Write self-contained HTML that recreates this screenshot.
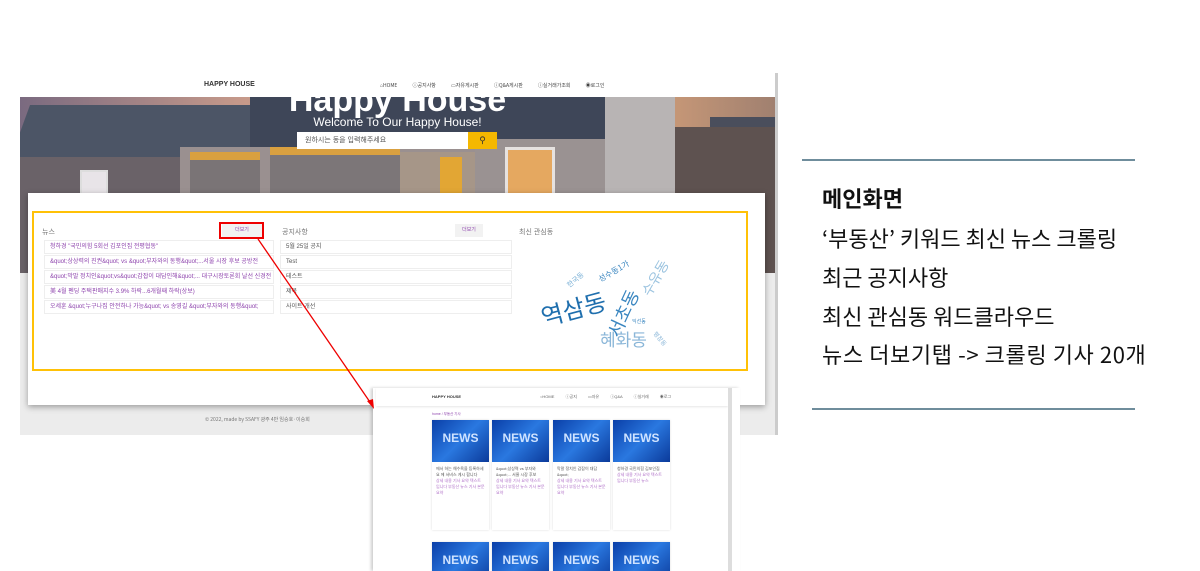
<!DOCTYPE html>
<html><head><meta charset="utf-8">
<style>
*{margin:0;padding:0;box-sizing:border-box}
html,body{width:1200px;height:571px;overflow:hidden}
body{background:#fff;position:relative;font-family:"Liberation Sans","Noto Sans CJK KR",sans-serif}
.abs{position:absolute}
.nav{left:20px;top:73px;width:758px;height:24px;background:#fff;font-size:7px;color:#333}
.hero{left:20px;top:97px;width:755px;height:176px;overflow:hidden;background:#8a8088}
.card{left:28px;top:193px;width:737px;height:212px;background:#fff;box-shadow:0 2px 6px rgba(0,0,0,.35)}
.ybox{left:32px;top:211px;width:716px;height:160px;border:2px solid #ffc107}
.row{position:absolute;height:14px;border:1px solid #eee;font-size:6px;line-height:12px;padding-left:5px;white-space:nowrap;overflow:hidden}
.news{color:#8e44ad;left:44px;width:230px}
.notice{color:#555;left:280px;width:232px}
.wc{position:absolute;color:#2a7ab8;white-space:nowrap;font-family:"Noto Sans CJK KR",sans-serif}
.nc{position:absolute;width:57px;height:110px;background:#fff;box-shadow:0 0 2px rgba(0,0,0,.15)}
.nimg{width:57px;height:42px;background:linear-gradient(135deg,#0a3fa8,#2a78e0 50%,#0b3a9a);color:#cfe3ff;font-size:12px;text-align:center;line-height:36px;font-weight:bold}
.ntx{font-size:4px;line-height:6px;color:#555;padding:4px}
.side{font-size:22px;color:#111;left:822px;font-family:"Noto Sans CJK KR",sans-serif;white-space:nowrap}
</style></head><body>

<div class="abs" style="left:20px;top:97px;width:758px;height:338px;background:#ececec"></div>
<div class="abs nav">
  <div class="abs" style="left:184px;top:8px;font-size:7px;font-weight:bold;color:#333">HAPPY HOUSE</div>
  <div class="abs" style="left:360px;top:9px;font-size:5px;color:#444;word-spacing:14px;font-family:'Noto Sans CJK KR',sans-serif">⌂HOME ⓘ공지사항 ▭자유게시판 ⓘQ&amp;A게시판 ⓘ실거래가조회 ◉로그인</div>
</div>
<div class="abs hero">
  <!-- sky -->
  <div class="abs" style="left:0;top:0;width:755px;height:40px;background:linear-gradient(90deg,#7a6a80,#c79a8a 30%,#8a7a88 50%,#d8a27a 80%,#a08070)"></div>
  <!-- roofs -->
  <div class="abs" style="left:0;top:8px;width:290px;height:55px;background:#4c5566;transform:skewX(-20deg)"></div>
  <div class="abs" style="left:230px;top:0;width:400px;height:55px;background:#3e4658"></div>
  <div class="abs" style="left:690px;top:20px;width:70px;height:40px;background:#4a4e5c"></div>
  <!-- walls -->
  <div class="abs" style="left:0;top:60px;width:160px;height:116px;background:#6a6268"></div>
  <div class="abs" style="left:60px;top:73px;width:28px;height:44px;background:#e8e4e8;border:2px solid #ddd"></div>
  <div class="abs" style="left:160px;top:50px;width:300px;height:126px;background:#9a9090"></div>
  <div class="abs" style="left:170px;top:55px;width:70px;height:121px;background:#7a7476"></div>
  <div class="abs" style="left:170px;top:55px;width:70px;height:8px;background:#d9a040"></div>
  <div class="abs" style="left:250px;top:50px;width:130px;height:126px;background:#7c7678"></div>
  <div class="abs" style="left:250px;top:50px;width:130px;height:8px;background:#d9a040"></div>
  <div class="abs" style="left:380px;top:55px;width:80px;height:121px;background:#a69688"></div>
  <div class="abs" style="left:420px;top:60px;width:22px;height:116px;background:#e2a634"></div>
  <div class="abs" style="left:455px;top:42px;width:130px;height:134px;background:#9a9292"></div>
  <div class="abs" style="left:485px;top:50px;width:50px;height:75px;background:#e5a860;border:3px solid #e6e2e0"></div>
  <div class="abs" style="left:585px;top:0;width:70px;height:176px;background:#b8b4b4"></div>
  <div class="abs" style="left:655px;top:30px;width:100px;height:146px;background:#5e5250"></div>
  <div class="abs" style="left:690px;top:100px;width:50px;height:76px;background:#6a3f34"></div>
  <div class="abs" style="left:0;top:-16px;width:755px;text-align:center;font-size:34px;font-weight:bold;color:#fff">Happy House</div>
  <div class="abs" style="left:0;top:18px;width:755px;text-align:center;font-size:12px;color:#fff">Welcome To Our Happy House!</div>
  <div class="abs" style="left:277px;top:35px;width:171px;height:17px;background:#fff;font-size:7px;line-height:17px;padding-left:8px;color:#555">원하시는 동을 입력해주세요</div>
  <div class="abs" style="left:448px;top:35px;width:29px;height:17px;background:#f5b800;font-size:9px;line-height:17px;text-align:center;color:#333">⚲</div>
</div>
<div class="abs" style="left:775px;top:73px;width:3px;height:362px;background:#ccc"></div>

<div class="abs card"></div>
<div class="abs ybox"></div>
<div class="abs" style="left:42px;top:227px;font-size:7px;color:#777">뉴스</div>
<div class="abs" style="left:222px;top:224px;width:40px;height:13px;background:#f2f2f2;font-size:5px;color:#8e44ad;text-align:center;line-height:12px">더보기</div>
<div class="abs" style="left:219px;top:222px;width:45px;height:17px;border:2px solid #e00"></div>
<div class="abs" style="left:282px;top:227px;font-size:7px;color:#777">공지사항</div>
<div class="abs" style="left:455px;top:224px;width:28px;height:13px;background:#f2f2f2;font-size:5px;color:#8e44ad;text-align:center;line-height:12px">더보기</div>
<div class="abs" style="left:519px;top:227px;font-size:7px;color:#777">최신 관심동</div>

<div class="row news" style="top:240px">청하경 "국민의힘 5회선 김포인집 전평협동"</div>
<div class="row news" style="top:255px">&amp;quot;상상력의 진권&amp;quot; vs &amp;quot;부자와의 동행&amp;quot;...서울 시장 후보 공방전</div>
<div class="row news" style="top:270px">&amp;quot;막말 정치인&amp;quot;vs&amp;quot;감잡이 대담인해&amp;quot;... 대구시장토론회 날선 신경전</div>
<div class="row news" style="top:285px">美 4월 펜딩 주택판매지수 3.9% 하락...6개월째 하락(상보)</div>
<div class="row news" style="top:300px">오세훈 &amp;quot;누구나집 안전하나 가능&amp;quot; vs 송영길 &amp;quot;부자와의 동행&amp;quot;</div>
<div class="row notice" style="top:240px">5월 25일 공지</div>
<div class="row notice" style="top:255px">Test</div>
<div class="row notice" style="top:270px">테스트</div>
<div class="row notice" style="top:285px">제목</div>
<div class="row notice" style="top:300px">사이트 개선</div>

<div class="wc" style="left:540px;top:290px;font-size:24px;color:#1f6fae;transform:rotate(-15deg)">역삼동</div>
<div class="wc" style="left:600px;top:326px;font-size:17px;color:#8ab6d8">혜화동</div>
<div class="wc" style="left:598px;top:300px;font-size:18px;color:#3a86c0;transform:rotate(-65deg)">서초동</div>
<div class="wc" style="left:636px;top:268px;font-size:14px;color:#9cc4e0;transform:rotate(-60deg)">수유동</div>
<div class="wc" style="left:597px;top:266px;font-size:8px;color:#3a86c0;transform:rotate(-30deg)">성수동1가</div>
<div class="wc" style="left:566px;top:275px;font-size:7px;color:#7ab0d6;transform:rotate(-40deg)">한국동</div>
<div class="wc" style="left:632px;top:318px;font-size:5px;color:#3a86c0">익선동</div>
<div class="wc" style="left:652px;top:334px;font-size:6px;color:#8ab6d8;transform:rotate(50deg)">평창동</div>

<div class="abs" style="left:205px;top:416px;font-size:5px;color:#777;font-family:'Noto Sans CJK KR',sans-serif">© 2022, made by SSAFY 광주 4반 임승호·이승희</div>

<!-- second screenshot -->
<div class="abs" style="left:373px;top:388px;width:367px;height:183px;overflow:hidden;background:#fff;box-shadow:-2px 0 3px rgba(0,0,0,.2)">
<div class="abs" style="left:3px;top:0;width:352px;height:18px;background:#fff;box-shadow:0 1px 2px rgba(0,0,0,.1)"></div>
<div class="abs" style="left:355px;top:0;width:4px;height:183px;background:#ddd"></div>
<div class="abs" style="left:59px;top:6px;font-size:4px;font-weight:bold;color:#333">HAPPY HOUSE</div>
<div class="abs" style="left:167px;top:6px;font-size:4px;color:#666;word-spacing:10px">○HOME ⓘ공지 ▭자유 ⓘQ&amp;A ⓘ실거래 ◉로그</div>
<div class="abs" style="left:59px;top:24px;font-size:3.5px;color:#8e44ad">home / 부동산 기사</div>
<div class="nc" style="left:59px;top:32px"><div class="nimg">NEWS</div><div class="ntx">에서 하는 해수욕을 등록하세요 에 서비스 게시 합니다<br><span style="color:#b070c8">상세 내용 기사 요약 텍스트 입니다 부동산 뉴스 기사 본문 요약</span></div></div>
<div class="nc" style="left:119px;top:32px"><div class="nimg">NEWS</div><div class="ntx">&amp;quot;상상력 vs 부자와 &amp;quot;... 서울 시장 후보<br><span style="color:#b070c8">상세 내용 기사 요약 텍스트 입니다 부동산 뉴스 기사 본문 요약</span></div></div>
<div class="nc" style="left:180px;top:32px"><div class="nimg">NEWS</div><div class="ntx">막말 정치인 감잡이 대담 &amp;quot;<br><span style="color:#b070c8">상세 내용 기사 요약 텍스트 입니다 부동산 뉴스 기사 본문 요약</span></div></div>
<div class="nc" style="left:240px;top:32px"><div class="nimg">NEWS</div><div class="ntx">청하경 국민의힘 김포인집<br><span style="color:#b070c8">상세 내용 기사 요약 텍스트 입니다 부동산 뉴스</span></div></div>
<div class="nc" style="left:59px;top:154px"><div class="nimg">NEWS</div></div>
<div class="nc" style="left:119px;top:154px"><div class="nimg">NEWS</div></div>
<div class="nc" style="left:180px;top:154px"><div class="nimg">NEWS</div></div>
<div class="nc" style="left:240px;top:154px"><div class="nimg">NEWS</div></div>
</div>

<svg class="abs" style="left:0;top:0" width="1200" height="571"><line x1="258" y1="239" x2="372" y2="405" stroke="#e00" stroke-width="1.3"/><polygon points="374,409 367,401 373,399" fill="#e00"/></svg>

<!-- right panel -->
<div class="abs" style="left:802px;top:159px;width:333px;height:2px;background:#6f8d9c"></div>
<div class="abs" style="left:812px;top:408px;width:323px;height:2px;background:#6f8d9c"></div>
<div class="abs side" style="top:182px;font-weight:bold">메인화면</div>
<div class="abs side" style="top:222px">‘부동산’ 키워드 최신 뉴스 크롤링</div>
<div class="abs side" style="top:261px">최근 공지사항</div>
<div class="abs side" style="top:300px">최신 관심동 워드클라우드</div>
<div class="abs side" style="top:338px;letter-spacing:0.6px">뉴스 더보기탭 -&gt; 크롤링 기사 20개</div>
</body></html>
